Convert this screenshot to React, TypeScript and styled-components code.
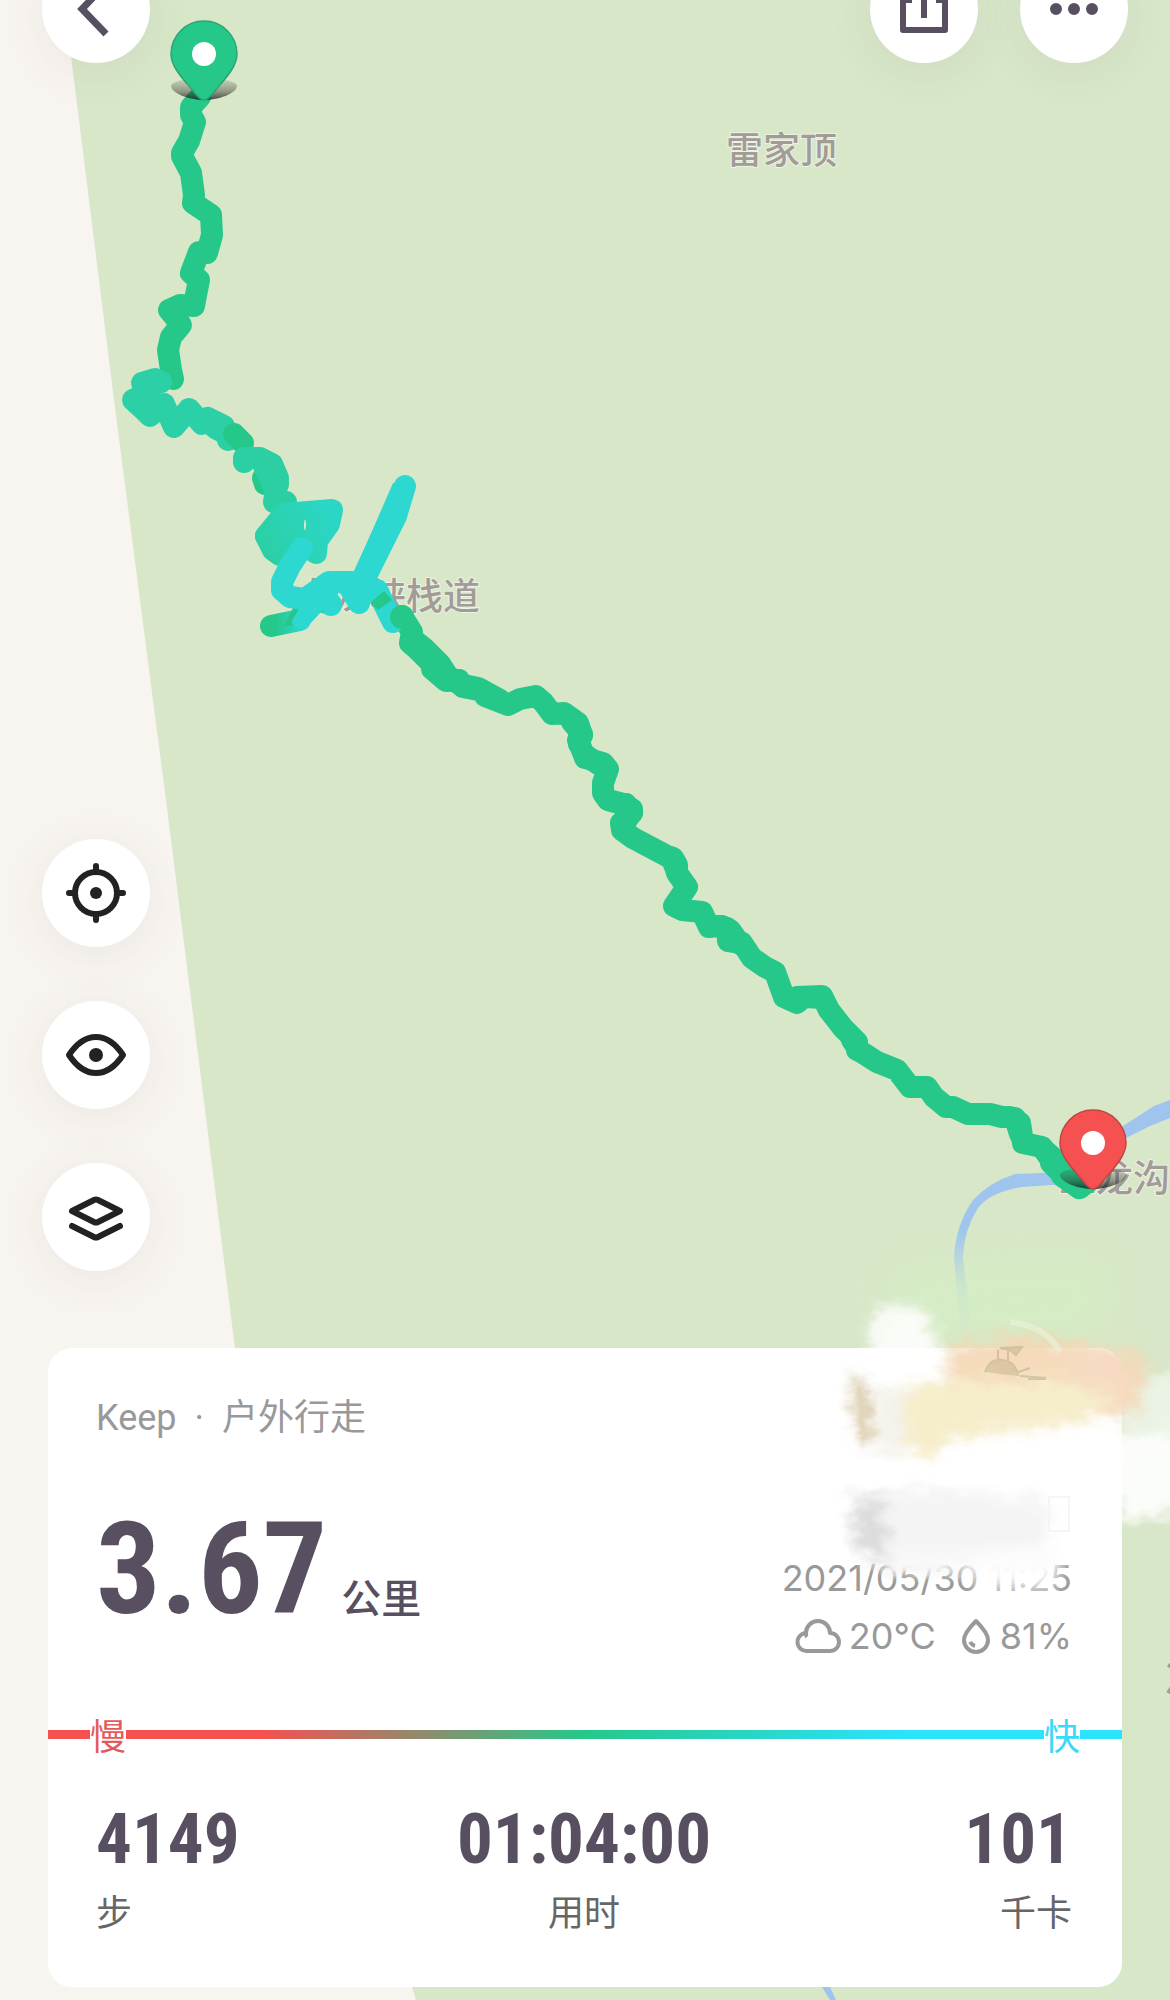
import React from "react";
import styled, { createGlobalStyle } from "styled-components";

const latin = `Roboto, "Noto Sans CJK SC", sans-serif`;
const cjk = `"Noto Sans CJK SC", sans-serif`;
const numeric = `Inter, Roboto, sans-serif`;
const digits = `"Roboto Condensed", Roboto, sans-serif`;

const GlobalStyle = createGlobalStyle`
  *, *::before, *::after { box-sizing: border-box; }
  body { margin: 0; background: #f8f4ef; }
`;

const Screen = styled.main`
  position: relative;
  isolation: isolate;
  display: flex;
  flex-direction: column;
  justify-content: space-between;
  min-height: 100vh;
  overflow: hidden;
  font-family: ${latin};
  color: #584f60;
`;

const MapCanvas = styled.svg`
  position: absolute;
  inset: 0;
  z-index: -1;
  width: 100%;
  height: 100%;
`;

const PlaceName = styled.text`
  font-family: ${cjk};
  font-size: 37px;
  font-weight: 500;
  fill: #a29b97;
  stroke: rgba(255, 255, 255, 0.5);
  stroke-width: 2px;
  paint-order: stroke;
`;

const TopBar = styled.header`
  display: flex;
  justify-content: space-between;
  margin-top: -45px;
  padding: 0 42px;
`;

const Actions = styled.div`
  display: flex;
  gap: 42px;
`;

const Bottom = styled.div`
  display: flex;
  flex-direction: column;
  gap: 77px;
  padding: 0 48px 13px;
`;

const Tools = styled.nav`
  display: flex;
  flex-direction: column;
  gap: 54px;
  margin-left: -6px;
`;

const RoundButton = styled.button`
  display: grid;
  place-items: center;
  width: 108px;
  height: 108px;
  padding: 0;
  border: 0;
  border-radius: 50%;
  background: #fff;
  box-shadow: 0 8px 48px rgba(88, 79, 96, 0.08);
  cursor: pointer;
`;

const ButtonIcon = styled.svg<{ $tone?: string }>`
  width: 108px;
  height: 108px;
  fill: none;
  stroke: ${(p) => p.$tone ?? "#222"};
  stroke-width: 6;
  stroke-linecap: round;
  stroke-linejoin: round;
`;

const Card = styled.section`
  position: relative;
  padding-top: 46px;
  padding-bottom: 51px;
  border-radius: 24px;
  background: #fff;
`;

const Source = styled.h1`
  display: flex;
  gap: 18px;
  margin: 0 48px;
  font-size: 36px;
  font-weight: 400;
  line-height: 48px;
  color: #999;
`;

const Summary = styled.div`
  display: flex;
  justify-content: space-between;
  align-items: flex-start;
  margin: 56px 50px 0 48px;
`;

const Distance = styled.p`
  display: flex;
  align-items: baseline;
  gap: 14px;
  margin: 0;
`;

const DistanceValue = styled.span`
  font-family: ${digits};
  font-size: 128px;
  font-weight: 700;
  line-height: 142px;
`;

const DistanceUnit = styled.span`
  font-size: 40px;
  font-weight: 500;
  line-height: 48px;
`;

const Meta = styled.div`
  display: flex;
  flex-direction: column;
  align-items: flex-end;
  padding-top: 51px;
  font-family: ${numeric};
  font-size: 36px;
  line-height: 58px;
  color: #999;
`;

const Weather = styled.div`
  display: flex;
  gap: 24px;
`;

const Reading = styled.span`
  display: flex;
  align-items: center;
  gap: 8px;
`;

const ReadingIcon = styled.svg`
  height: 36px;
  fill: none;
  stroke: #999;
  stroke-width: 4;
  stroke-linejoin: round;
`;

const PaceScale = styled.div`
  display: flex;
  justify-content: space-between;
  margin-top: 45px;
  padding: 0 42px;
  background: linear-gradient(90deg, #f55151 20%, #26c889 50%, #2be3ff 80%) center / 100% 9px no-repeat;
`;

const PaceLabel = styled.span<{ $tone: string }>`
  background: #fff;
  color: ${(p) => p.$tone};
  font-family: ${cjk};
  font-size: 36px;
  line-height: 48px;
`;

const Stats = styled.dl`
  display: grid;
  grid-template-columns: 1fr 1fr 1fr;
  margin: 36px 50px 0 48px;
`;

const Stat = styled.div<{ $align: string }>`
  display: flex;
  flex-direction: column-reverse;
  text-align: ${(p) => p.$align};
`;

const StatName = styled.dt`
  font-family: ${cjk};
  font-size: 36px;
  line-height: 52px;
  color: #666;
`;

const StatValue = styled.dd`
  margin: 0;
  font-family: ${digits};
  font-size: 71px;
  font-weight: 700;
  line-height: 90px;
`;

const Smudge = styled.svg`
  position: absolute;
  top: -148px;
  right: -48px;
  width: 370px;
  height: 460px;
  pointer-events: none;
`;

const green = "#26c889";
const teal = "#2cd0a6";
const cyan = "#2cd8d0";

const upperTrack =
  "200,97 191,107 191,115 195,122 189,141 182,153 182,156 191,173 194,195 193,203 211,215 212,235 207,253 199,252 191,273 199,280 196,295 194,306 180,305 169,310 181,325 171,337 168,350 171,370 173,379";

const lowerTrack =
  "402,616 412,632 410,643 418,650 432,664 432,669 446,681 459,680 463,687 483,691 485,696 508,705 520,699 536,696 543,702 552,714 564,713 578,723 582,735 578,740 582,750 585,758 603,763 608,769 603,783 603,793 608,800 623,804 632,809 632,813 621,823 622,830 633,838 667,856 673,858 677,865 677,873 687,887 674,906 682,910 702,912 709,927 718,926 727,928 728,941 742,943 752,958 765,967 775,972 784,997 797,1003 804,997 823,998 829,1010 843,1028 857,1042 857,1050 863,1053 877,1062 897,1070 910,1087 927,1087 934,1097 946,1107 953,1107 968,1114 990,1114 1002,1117 1010,1117 1020,1123 1023,1143 1042,1147 1051,1160 1051,1163 1066,1178 1079,1188 1088,1182";

const overlapTrack =
  "414,640 424,648 440,664 447,675 459,684 478,688 500,700M572,722 582,734 579,744M585,755 606,769M626,804 632,812 624,824M672,859 677,872M722,926 730,930 740,944 732,940M797,997 822,996M852,1040 856,1046M1015,1118 1020,1134M1042,1148 1058,1162 1062,1176 1080,1188";

function Pin({ x, y, color, edge }: { x: number; y: number; color: string; edge: string }) {
  return (
    <g transform={`translate(${x} ${y})`}>
      <path d="M-33 -14C-33 -24 33 -24 33 -14C33 -7 15 0 0 0S-33 -7 -33 -14Z" fill="url(#pinShade)" />
      <path
        d="M0 0C-4 0 -7 -4 -10 -8C-18 -18 -33 -32 -33 -46A33 33 0 0 1 33 -46C33 -32 18 -18 10 -8C7 -4 4 0 0 0Z"
        fill={color}
        stroke={edge}
        strokeWidth="1.5"
      />
      <circle cx="0" cy="-46" r="12" fill="#fff" />
    </g>
  );
}

function TrailMap() {
  return (
    <MapCanvas viewBox="0 0 1170 2000" preserveAspectRatio="xMidYMin slice" aria-label="轨迹地图">
      <defs>
        <linearGradient id="pinShade" x1="0" y1="0" x2="0" y2="1">
          <stop offset="0" stopColor="#333" stopOpacity="0.1" />
          <stop offset="0.6" stopColor="#222" stopOpacity="0.4" />
          <stop offset="1" stopColor="#111" stopOpacity="0.75" />
        </linearGradient>
        <linearGradient id="spur" gradientUnits="userSpaceOnUse" x1="276" y1="0" x2="302" y2="0">
          <stop offset="0" stopColor={green} />
          <stop offset="1" stopColor={cyan} />
        </linearGradient>
        <linearGradient id="bend" gradientUnits="userSpaceOnUse" x1="260" y1="540" x2="330" y2="510">
          <stop offset="0" stopColor={teal} />
          <stop offset="1" stopColor="#2bd6c6" />
        </linearGradient>
        <linearGradient id="stream" gradientUnits="userSpaceOnUse" x1="0" y1="1230" x2="0" y2="1330">
          <stop offset="0" stopColor="#9fc5ef" />
          <stop offset="1" stopColor="#9fc5ef" stopOpacity="0" />
        </linearGradient>
      </defs>
      <rect width="1170" height="2000" fill="#f8f4ef" />
      <path d="M64 0L114 400L166 800L235 1348L250 1440L412 1987L416 2000H1170V0Z" fill="#d8e7c8" />

      <path d="M1120 1128L1154 1106L1170 1100V1118L1150 1126L1122 1140Z" fill="#9fc5ef" />
      <path
        d="M1062 1172L1015 1174Q990 1182 973 1200Q956 1224 954 1257L960 1330H971L963 1257Q964 1230 978 1208Q990 1192 1022 1187L1066 1184Z"
        fill="url(#stream)"
      />
      <path d="M815 1970L822 1987L830 2000H836L830 1987L825 1970Z" fill="#9fc5ef" />

      <PlaceName x="726" y="164">雷家顶</PlaceName>
      <PlaceName x="295" y="610">大龙峡栈道</PlaceName>
      <PlaceName x="1059" y="1192">五龙沟</PlaceName>
      <path d="M1168 1665l4 2M1168 1693l4-6" stroke="#a29b97" strokeWidth="4" />

      <g fill="none" strokeWidth="22" strokeLinecap="round" strokeLinejoin="round">
        <polyline points={upperTrack} stroke={green} />
        <polyline points={lowerTrack} stroke={green} />
        <path d={`M${overlapTrack}`} stroke={green} />
        <polyline
          points="161,382 155,379 142,383 150,392 133,400 145,411 150,416 164,404 174,427 189,409 202,424 208,418 224,426 228,440"
          stroke={teal}
        />
        <path d="M150 384L164 402L176 420L152 416L138 400Z" fill={teal} stroke="none" />
        <path d="M198 418L206 424L220 424L226 438L214 432Z" fill={teal} stroke={teal} strokeWidth="14" />
        <polyline points="234,434 243,443" stroke={green} />
        <polyline points="263,478 265,484" stroke={green} />
        <g stroke="#2bcfa3">
          <polyline points="244,462 244,458 260,458 272,464 278,478 276,490 274,502 286,502 284,520 266,536 273,550 280,555" />
          <polyline points="270,478 279,500" />
          <polyline points="266,466 276,484" strokeWidth="26" />
        </g>
        <path d="M284 514L332 510L329 524L317 541L316 553L300 542L283 555L266 536Z" fill="url(#bend)" stroke="url(#bend)" />
        <ellipse cx="305" cy="525" rx="1" ry="5" fill="#d8e7c8" />
        <polyline points="377,590 384,604 393,622" stroke={cyan} />
        <path d="M370 603L384 591L392 600L378 610Z" fill={green} />
        <circle cx="402" cy="617" r="12" fill={green} />
        <polyline points="271,626 300,620" stroke="url(#spur)" />
        <path d="M294 606L310 607L327 600L320 612L300 625L284 626Z" fill={green} />
        <path d="M318 612L336 590L341 606L326 614Z" fill={green} />
        <polyline
          points="302,548 290,566 282,582 282,590 290,597 305,599 329,582 361,582 405,486 396,516 366,576 359,603 350,588"
          stroke={cyan}
        />
        <path d="M310 600L332 580L340 584L303 624L297 622Z" fill={cyan} stroke={cyan} strokeWidth="10" />
        <polyline points="331,604 331,605" stroke={cyan} />
      </g>
      <path d="M353 575L393 483L414 490L406 518L375 582Z" fill={cyan} />

      <Pin x={204} y={100} color={green} edge="#2da475" />
      <Pin x={1093} y={1189} color="#f55151" edge="#c04444" />
    </MapCanvas>
  );
}

function PaintSmudge() {
  return (
    <Smudge viewBox="800 1200 370 460" aria-hidden="true">
      <defs>
        <filter id="brush" x="-20%" y="-20%" width="140%" height="140%">
          <feTurbulence type="fractalNoise" baseFrequency="0.05 0.08" numOctaves="4" seed="4" result="n" />
          <feGaussianBlur in="SourceGraphic" stdDeviation="7" result="b" />
          <feDisplacementMap in="b" in2="n" scale="22" xChannelSelector="R" yChannelSelector="G" />
        </filter>
        <filter id="haze" x="-40%" y="-40%" width="180%" height="180%">
          <feGaussianBlur stdDeviation="22" />
        </filter>
        <filter id="veil" x="-40%" y="-60%" width="180%" height="220%">
          <feGaussianBlur stdDeviation="8" />
        </filter>
      </defs>
      <path d="M890 1270L1110 1260L1100 1335H900Z" fill="#d3f0c2" opacity="0.7" filter="url(#haze)" />
      <g filter="url(#brush)">
        <path d="M870 1316L878 1304L888 1314L897 1298L908 1310L916 1304L932 1320L946 1390L870 1370Z" fill="#fff" opacity="0.85" />
        <path d="M868 1356H942L952 1440H878Z" fill="#fff" />
        <path d="M1122 1380L1200 1370V1440L1122 1446Z" fill="#eff6ec" opacity="0.8" />
        <path d="M1110 1440L1200 1430V1506L1122 1524Z" fill="#fff" opacity="0.9" />
        <path d="M945 1350L1010 1334L1060 1338L1150 1356L1138 1416H950Z" fill="#f4d6b4" opacity="0.9" />
        <path d="M1064 1350L1130 1356V1412L1064 1406Z" fill="#f6dcc6" opacity="0.7" />
        <path d="M900 1386L950 1380L1060 1380L1116 1396L1080 1424L950 1438L936 1456L904 1448Z" fill="#f6edca" />
        <path d="M852 1382L868 1378L874 1445L858 1442Z" fill="#d8c8a4" />
        <path d="M878 1388H905V1455L880 1452Z" fill="#f4f2ea" />
        <path d="M1040 1440L1120 1430V1500H950V1452Z" fill="#fff" />
        <path d="M850 1496L930 1488L1050 1500V1564L900 1574L858 1556Z" fill="#f4f4f5" />
        <path d="M850 1500L880 1496L890 1566L858 1550Z" fill="#dcdcdd" />
      </g>
      <path d="M974 1556L1056 1548V1588H974Z" fill="#fff" opacity="0.95" filter="url(#veil)" />
      <path d="M890 1552H1060V1568H890Z" fill="#fbfbfb" opacity="0.9" filter="url(#veil)" />
      <path d="M1010 1322Q1046 1326 1060 1352" fill="none" stroke="#eaf3dc" strokeWidth="6" opacity="0.6" />
      <g fill="none" stroke="#b5ad90" strokeWidth="2" opacity="0.55">
        <path
          d="M1000 1348L1022 1347L1016 1355L1010 1350ZM985 1372Q990 1358 1003 1360T1018 1376M998 1350v10M1008 1350v10M1018 1372l12-4M1020 1376l26 2M1028 1379h18"
          fill="#c9b78f"
        />
      </g>
      <rect x="1049" y="1497" width="20" height="34" fill="none" stroke="#f5f5f5" strokeWidth="2" />
    </Smudge>
  );
}

const stats = [
  { name: "步", value: "4149", align: "left" },
  { name: "用时", value: "01:04:00", align: "center" },
  { name: "千卡", value: "101", align: "right" },
];

export default function App() {
  return (
    <>
      <GlobalStyle />
      <Screen>
        <TrailMap />
        <TopBar>
          <RoundButton aria-label="返回">
            <ButtonIcon viewBox="0 0 108 108" $tone="#584f60">
              <path d="M64 29L40 54L64 79" strokeWidth="7" strokeLinecap="butt" strokeLinejoin="miter" />
            </ButtonIcon>
          </RoundButton>
          <Actions>
            <RoundButton aria-label="分享">
              <ButtonIcon viewBox="0 0 108 108" $tone="#584f60">
                <path d="M42 45H33V75H75V45H66M54 63V28M43 37L54 27L65 37" strokeLinecap="butt" />
              </ButtonIcon>
            </RoundButton>
            <RoundButton aria-label="更多">
              <ButtonIcon viewBox="0 0 108 108" $tone="#584f60">
                <path d="M36 54h0M54 54h0M72 54h0" strokeWidth="12" />
              </ButtonIcon>
            </RoundButton>
          </Actions>
        </TopBar>

        <Bottom>
          <Tools aria-label="地图工具">
            <RoundButton aria-label="定位">
              <ButtonIcon viewBox="0 0 108 108">
                <circle cx="54" cy="54" r="21" />
                <path d="M54 27v5M54 76v5M27 54h5M76 54h5" />
                <circle cx="54" cy="54" r="6" fill="#222" stroke="none" />
              </ButtonIcon>
            </RoundButton>
            <RoundButton aria-label="显示">
              <ButtonIcon viewBox="0 0 108 108">
                <path d="M27 54Q39 36 54 36T81 54Q69 72 54 72T27 54Z" />
                <circle cx="54" cy="54" r="7" fill="#222" stroke="none" />
              </ButtonIcon>
            </RoundButton>
            <RoundButton aria-label="图层">
              <ButtonIcon viewBox="0 0 108 108">
                <path d="M30 48L52 37Q54 36 56 37L78 48L56 59Q54 60 52 59Z" />
                <path d="M30 63L52 74Q54 75 56 74L78 63" />
              </ButtonIcon>
            </RoundButton>
          </Tools>

          <Card>
            <Source>
              <span>Keep</span>
              <span>·</span>
              <span>户外行走</span>
            </Source>
            <Summary>
              <Distance>
                <DistanceValue>3.67</DistanceValue>
                <DistanceUnit>公里</DistanceUnit>
              </Distance>
              <Meta>
                <time dateTime="2021-05-30T11:25">2021/05/30 11:25</time>
                <Weather>
                  <Reading>
                    <ReadingIcon viewBox="0 0 46 36" width="46">
                      <path d="M12 33H35A9 9 0 0 0 35 15A12 12 0 0 0 11 15A9 9 0 0 0 12 33ZM11 15Q11 18 12 19" />
                    </ReadingIcon>
                    20°C
                  </Reading>
                  <Reading>
                    <ReadingIcon viewBox="0 0 32 36" width="32">
                      <path d="M16 3Q4 15 4 22A12 12 0 0 0 28 22Q28 15 16 3ZM10 24Q12 27 15 28" />
                    </ReadingIcon>
                    81%
                  </Reading>
                </Weather>
              </Meta>
            </Summary>
            <PaceScale>
              <PaceLabel $tone="#e45a5c">慢</PaceLabel>
              <PaceLabel $tone="#3ad9f5">快</PaceLabel>
            </PaceScale>
            <Stats>
              {stats.map((s) => (
                <Stat key={s.name} $align={s.align}>
                  <StatName>{s.name}</StatName>
                  <StatValue>{s.value}</StatValue>
                </Stat>
              ))}
            </Stats>
            <PaintSmudge />
          </Card>
        </Bottom>
      </Screen>
    </>
  );
}
